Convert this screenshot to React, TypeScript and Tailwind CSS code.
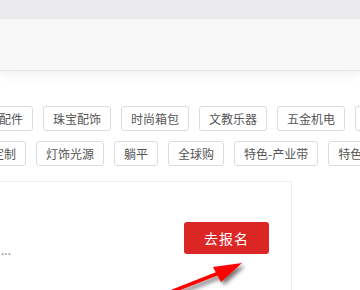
const rowOne = ['服饰配件', '珠宝配饰', '时尚箱包', '文教乐器', '五金机电', '家居百货']
const rowTwo = ['个性定制', '灯饰光源', '躺平', '全球购', '特色-产业带', '特色市场']

function Tag({ label }: { label: string }) {
  return (
    <span className="shrink-0 h-[25px] px-[9px] flex items-center border border-[#dcdcdc] rounded-[3px] text-[12px] text-[#555] leading-none whitespace-nowrap">
      {label}
    </span>
  )
}

export default function App() {
  return (
    <div
      className="relative w-[360px] h-[290px] overflow-hidden bg-white"
      style={{ fontFamily: '"Noto Sans CJK SC", "Noto Sans", sans-serif' }}
    >
      <div className="h-[19px] bg-[#ebebee]" />
      <div className="h-[52px] bg-[#f8f8f8] border-b border-[#e6e6e6] shadow-[0_4px_10px_rgba(0,0,0,0.06)]" />

      <div className="pt-[35px]">
        <div className="flex gap-[10px] ml-[-35px]">
          {rowOne.map((t) => (
            <Tag key={t} label={t} />
          ))}
        </div>
        <div className="flex gap-[10px] ml-[-42px] mt-[10px]">
          {rowTwo.map((t) => (
            <Tag key={t} label={t} />
          ))}
        </div>
      </div>

      <div className="mt-[15px] ml-[-20px] w-[312px] h-[120px] border border-[#eeeeee] flex items-start">
        <div className="flex-1 pt-[62px] pl-[20px] text-[12px] text-[#888] leading-none">...</div>
        <button className="mt-[40px] mr-[22px] w-[85px] h-[32px] bg-[#dc2626] rounded-[3px] text-white text-[14px] tracking-[1px]">
          去报名
        </button>
      </div>

      <svg className="absolute left-0 top-0" width="360" height="290" viewBox="0 0 360 290">
        <defs>
          <filter id="sh" x="-20%" y="-50%" width="150%" height="200%">
            <feGaussianBlur in="SourceAlpha" stdDeviation="2" />
            <feOffset dx="3" dy="3" result="b" />
            <feFlood floodColor="#000" floodOpacity="0.55" />
            <feComposite in2="b" operator="in" />
            <feMerge>
              <feMergeNode />
              <feMergeNode in="SourceGraphic" />
            </feMerge>
          </filter>
        </defs>
        <g filter="url(#sh)">
          <line x1="150" y1="300" x2="224" y2="271" stroke="#ff0000" strokeWidth="3.5" />
          <polygon points="242,263 213,267 221,282" fill="#ff0000" />
        </g>
      </svg>
    </div>
  )
}
